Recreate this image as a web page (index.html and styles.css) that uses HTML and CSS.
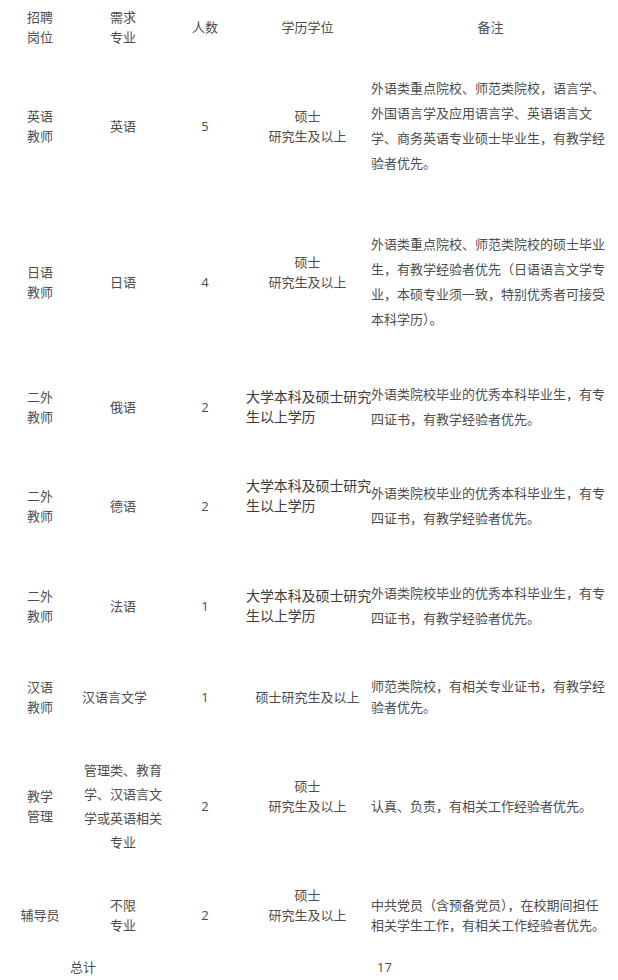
FILE: index.html
```html
<!DOCTYPE html>
<html lang="zh-CN">
<head>
<meta charset="utf-8">
<title>招聘岗位</title>
<link rel="stylesheet" href="styles.css">
</head>
<body>
<div class="page">
<table class="jobs">
  <colgroup>
    <col class="c1"><col class="c2"><col class="c3"><col class="c4"><col class="c5">
  </colgroup>
  <tr class="r0">
    <td>招聘<br>岗位</td>
    <td>需求<br>专业</td>
    <td>人数</td>
    <td>学历学位</td>
    <td>备注</td>
  </tr>
  <tr class="r1">
    <td>英语<br>教师</td>
    <td>英语</td>
    <td>5</td>
    <td>硕士<br>研究生及以上</td>
    <td class="note lh25">外语类重点院校、师范类院校，语言学、<br>外国语言学及应用语言学、英语语言文<br>学、商务英语专业硕士毕业生，有教学经<br>验者优先。</td>
  </tr>
  <tr class="r2">
    <td>日语<br>教师</td>
    <td>日语</td>
    <td>4</td>
    <td class="sh">硕士<br>研究生及以上</td>
    <td class="note lh25">外语类重点院校、师范类院校的硕士毕业<br>生，有教学经验者优先（日语语言文学专<br>业，本硕专业须一致，特别优秀者可接受<br>本科学历）。</td>
  </tr>
  <tr class="r3">
    <td>二外<br>教师</td>
    <td>俄语</td>
    <td>2</td>
    <td class="deg">大学本科及硕士研究<br>生以上学历</td>
    <td class="note lh25">外语类院校毕业的优秀本科毕业生，有专<br>四证书，有教学经验者优先。</td>
  </tr>
  <tr class="r4">
    <td>二外<br>教师</td>
    <td>德语</td>
    <td>2</td>
    <td class="deg sh">大学本科及硕士研究<br>生以上学历</td>
    <td class="note lh25">外语类院校毕业的优秀本科毕业生，有专<br>四证书，有教学经验者优先。</td>
  </tr>
  <tr class="r5">
    <td>二外<br>教师</td>
    <td>法语</td>
    <td>1</td>
    <td class="deg">大学本科及硕士研究<br>生以上学历</td>
    <td class="note lh25">外语类院校毕业的优秀本科毕业生，有专<br>四证书，有教学经验者优先。</td>
  </tr>
  <tr class="r6">
    <td>汉语<br>教师</td>
    <td class="left">汉语言文学</td>
    <td>1</td>
    <td>硕士研究生及以上</td>
    <td class="note lh21">师范类院校，有相关专业证书，有教学经<br>验者优先。</td>
  </tr>
  <tr class="r7">
    <td>教学<br>管理</td>
    <td class="lh24">管理类、教育<br>学、汉语言文<br>学或英语相关<br>专业</td>
    <td>2</td>
    <td class="sh">硕士<br>研究生及以上</td>
    <td class="note">认真、负责，有相关工作经验者优先。</td>
  </tr>
  <tr class="r8">
    <td>辅导员</td>
    <td>不限<br>专业</td>
    <td>2</td>
    <td class="sh">硕士<br>研究生及以上</td>
    <td class="note">中共党员（含预备党员），在校期间担任<br>相关学生工作，有相关工作经验者优先。</td>
  </tr>
  <tr class="r9">
    <td colspan="2">总计</td>
    <td colspan="3" class="sum">17</td>
  </tr>
</table>
</div>
</body>
</html>
```

FILE: styles.css
```css
html, body {
  margin: 0;
  padding: 0;
  background: #ffffff;
}

.page {
  padding: 7px 0 0 0;
}

.jobs {
  width: 610px;
  table-layout: fixed;
  border-collapse: collapse;
  border-spacing: 0;
  font-family: "Open Sans", "Noto Sans CJK SC", sans-serif;
  font-size: 13px;
  line-height: 20px;
  color: #4d4d4d;
}

.c1 { width: 80px; }
.c2 { width: 86px; }
.c3 { width: 78px; }
.c4 { width: 127px; }
.c5 { width: 239px; }

.jobs td {
  padding: 0;
  text-align: center;
  vertical-align: middle;
  white-space: nowrap;
}

.jobs td.note {
  text-align: left;
}

.jobs td.left {
  text-align: left;
  padding-left: 2px;
}

.jobs td.deg {
  text-align: left;
  padding-left: 2px;
  font-size: 14px;
  color: #3c3c3c;
  letter-spacing: -0.1px;
}

.jobs td.sh {
  padding-bottom: 20px;
}

.jobs td.sum {
  padding-right: 7px;
}

.lh25 { line-height: 25px; }
.lh24 { line-height: 24px; }
.lh21 { line-height: 21px; }

.r0 { height: 40px; }
.r1 { height: 158px; }
.r2 { height: 154px; }
.r3 { height: 96px; }
.r4 { height: 102px; }
.r5 { height: 98px; }
.r6 { height: 84px; }
.r7 { height: 134px; }
.r8 { height: 84px; }
.r9 { height: 20px; }
```
